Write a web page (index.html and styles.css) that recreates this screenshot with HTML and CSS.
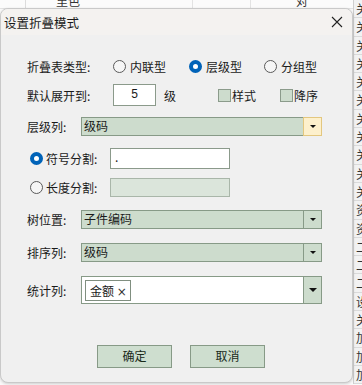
FILE: index.html
```html
<!DOCTYPE html>
<html>
<head>
<meta charset="utf-8">
<link rel="stylesheet" href="styles.css">
</head>
<body>
<div class="sheet">
  <div class="sheet-top">
    <span class="c1">里色</span>
    <span class="c2">对</span>
  </div>
  <div class="sheet-col">
    <div class="cell">关</div><div class="cell">关</div><div class="cell">关</div><div class="cell">关</div>
    <div class="cell">关</div><div class="cell">关</div><div class="cell">关</div><div class="cell">关</div>
    <div class="cell">关</div><div class="cell">关</div><div class="cell">关</div><div class="cell">资</div>
    <div class="cell">资</div><div class="cell">二</div><div class="cell">二</div><div class="cell">二</div>
    <div class="cell">设</div><div class="cell">关</div><div class="cell">加</div><div class="cell">加</div>
    <div class="cell">加</div>
  </div>
</div>

<div class="dialog">
  <div class="titlebar">
    <span class="title">设置折叠模式</span>
    <svg class="close" width="12" height="12" viewBox="0 0 12 12"><path d="M1 1 L11 11 M11 1 L1 11" stroke="#222" stroke-width="1.1" fill="none"/></svg>
  </div>
  <div class="body">
    <div class="row r1">
      <span class="label">折叠表类型:</span>
      <span class="opt o1"><span class="radio"></span>内联型</span>
      <span class="opt o2"><span class="radio on"></span>层级型</span>
      <span class="opt o3"><span class="radio"></span>分组型</span>
    </div>
    <div class="row r2">
      <span class="label">默认展开到:</span>
      <span class="num">5</span>
      <span class="unit">级</span>
      <span class="chk c-a"><span class="box"></span>样式</span>
      <span class="chk c-b"><span class="box"></span>降序</span>
    </div>
    <div class="row r3">
      <span class="label short">层级列:</span>
      <div class="combo"><span class="val">级码</span><span class="btn hot"><span class="tri"></span></span></div>
    </div>
    <div class="row r4">
      <span class="opt sub"><span class="radio on"></span>符号分割:</span>
      <span class="field">.</span>
    </div>
    <div class="row r5">
      <span class="opt sub"><span class="radio"></span>长度分割:</span>
      <span class="field off"></span>
    </div>
    <div class="row r6">
      <span class="label short">树位置:</span>
      <div class="combo"><span class="val">子件编码</span><span class="btn"><span class="tri"></span></span></div>
    </div>
    <div class="row r7">
      <span class="label short">排序列:</span>
      <div class="combo"><span class="val">级码</span><span class="btn"><span class="tri"></span></span></div>
    </div>
    <div class="row r8">
      <span class="label short">统计列:</span>
      <div class="combo multi"><span class="tags"><span class="tag">金额 <span class="x">×</span></span></span><span class="btn"><span class="tri big"></span></span></div>
    </div>
    <div class="buttons">
      <span class="button">确定</span>
      <span class="button">取消</span>
    </div>
  </div>
</div>
</body>
</html>
```

FILE: styles.css
```css
* { box-sizing: border-box; }
html, body {
  margin: 0;
  padding: 0;
  width: 362px;
  height: 385px;
  overflow: hidden;
  font-family: "Noto Sans CJK SC", "Noto Sans", sans-serif;
  font-size: 12px;
  color: #1a1a1a;
  background: #f7f7f7;
}
.sheet {
  position: relative;
  width: 362px;
  height: 385px;
  background: #fafafa;
}
.sheet-top {
  height: 9px;
  overflow: hidden;
  display: flex;
  border-bottom: 1px solid #e2e2e2;
  background: #fbfbfb;
  line-height: 12px;
  color: #333;
}
.sheet-top .c1 {
  width: 168px;
  padding-left: 30px;
  margin-top: -5px;
  border-left: 1px solid #dcdcdc;
  margin-left: 25px;
  border-right: 1px solid #e3e3e3;
}
.sheet-top .c2 {
  padding-left: 45px;
  margin-left: 57px;
  border-left: 1px solid #e3e3e3;
  margin-top: -5px;
}
.sheet-col {
  position: absolute;
  left: 353px;
  top: 0;
  width: 12px;
  border-left: 1px solid #cfcfcf;
  background: #f2f2f2;
}
.cell {
  height: 18.3px;
  line-height: 17px;
  padding-left: 2px;
  border-bottom: 1px solid #dadada;
  font-size: 12px;
  color: #333;
  overflow: hidden;
}

.dialog {
  position: absolute;
  left: 0;
  top: 8px;
  width: 353px;
  height: 375px;
  background: #f0f0f0;
  border-radius: 8px;
  border: 1px solid #c9c9c9;
  box-shadow: 0 1px 3px rgba(0,0,0,0.18);
  overflow: hidden;
}
.titlebar {
  height: 26px;
  background: #f4f2f0;
  display: flex;
  align-items: center;
  justify-content: space-between;
  padding: 0 9px 0 3px;
}
.title { font-size: 12.5px; color: #1a1a1a; }
.close { display: block; }

.body {
  display: flex;
  flex-direction: column;
}
.row {
  display: flex;
  align-items: center;
  padding-left: 26px;
}
.label { width: 86px; }
.label.short { width: 54px; }

.r1 { margin-top: 21px; height: 20px; }
.r2 { margin-top: 8px; height: 22px; }
.r3 { margin-top: 11px; height: 19px; }
.r4 { margin-top: 12px; height: 21px; padding-left: 29px; }
.r5 { margin-top: 9px; height: 19px; padding-left: 29px; }
.r6 { margin-top: 13px; height: 19px; }
.r7 { margin-top: 14px; height: 19px; }
.r8 { margin-top: 14px; height: 28px; }

.opt { display: flex; align-items: center; }
.radio {
  width: 13px;
  height: 13px;
  border-radius: 50%;
  border: 1px solid #5a5a5a;
  background: #f6f6f6;
  margin-right: 4px;
  flex: none;
}
.radio.on {
  border: 4px solid #0063b8;
  background: #fff;
}
.o1 { width: 76px; }
.o2 { width: 75px; }
.sub { width: 80px; }
.sub .radio { margin-right: 3px; }

.num {
  width: 43px;
  height: 22px;
  background: #fff;
  border: 1px solid #8b9a8b;
  text-align: center;
  line-height: 19px;
  font-family: "Liberation Sans", "Noto Sans CJK SC", sans-serif;
  font-size: 12px;
}
.unit { margin-left: 8px; width: 54px; }
.chk { display: flex; align-items: center; }
.c-a { width: 62px; }
.box {
  width: 13px;
  height: 13px;
  background: #cddccd;
  border: 1px solid #8b9b8b;
  margin-right: 1px;
}

.combo {
  width: 241px;
  height: 100%;
  display: flex;
  background: #cddccd;
  border: 1px solid #879a87;
}
.val { flex: 1; padding-left: 2px; line-height: 16px; }
.btn {
  width: 18px;
  border-left: 1px solid #879a87;
  display: flex;
  align-items: center;
  justify-content: center;
}
.btn.hot {
  background: #fdf0cc;
  border: 1px solid #e3c77f;
  margin: -1px -1px -1px 0;
  width: 19px;
}
.tri {
  width: 0;
  height: 0;
  border-left: 3px solid transparent;
  border-right: 3px solid transparent;
  border-top: 3px solid #111;
}
.tri.big {
  border-left-width: 4px;
  border-right-width: 4px;
  border-top-width: 4px;
}
.combo.multi { background: #fff; }
.combo.multi .btn { background: #cddccd; }
.tags { flex: 1; display: flex; align-items: center; padding-left: 3px; }
.tag {
  height: 21px;
  border: 1px solid #808f80;
  padding: 0 3px 0 4px;
  line-height: 19px;
  background: #fff;
}
.tag .x { font-family: "DejaVu Sans", sans-serif; font-size: 12px; color: #333; }

.field {
  width: 120px;
  height: 100%;
  background: #fff;
  border: 1px solid #8b9a8b;
  line-height: 16px;
  padding-left: 4px;
}
.field.off { background: #dbe5db; border-color: #a9b6a9; }

.buttons {
  margin-top: 41px;
  display: flex;
  gap: 18px;
  padding-left: 96px;
}
.button {
  width: 75px;
  height: 23px;
  background: #cedecf;
  border: 1px solid #879a87;
  text-align: center;
  line-height: 20px;
  color: #1a2a1a;
}
```
